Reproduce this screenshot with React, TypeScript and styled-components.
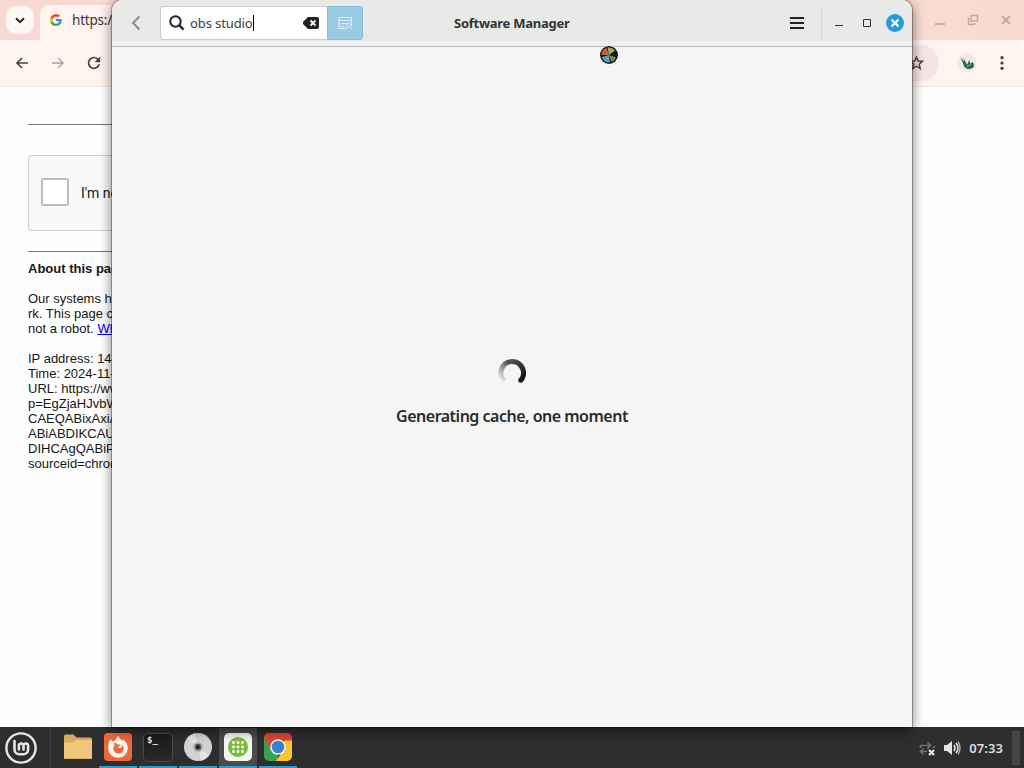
import React from "react";
import styled, { createGlobalStyle } from "styled-components";

const GlobalStyle = createGlobalStyle`
  * { box-sizing: border-box; }
  html, body { margin: 0; padding: 0; overflow: hidden; }
  body { font-family: "Noto Sans", "Open Sans", sans-serif; }
  svg { display: block; flex: none; }
`;

const Desktop = styled.div`
  position: relative;
  width: 1024px;
  height: 768px;
  display: flex;
  flex-direction: column;
  overflow: hidden;
`;

/* Browser window */
const Browser = styled.section`
  flex: 1;
  min-height: 0;
  display: flex;
  flex-direction: column;
  background: #fefefe;
`;
const TabStrip = styled.header`
  height: 40px;
  flex: none;
  display: flex;
  align-items: stretch;
  background: linear-gradient(90deg, #f8d9d2, #fae0d6 60%, #f8dbd0);
`;
const TabSearch = styled.div`
  width: 28px;
  height: 28px;
  margin: 6px;
  border-radius: 10px;
  background: #fff7f4;
  display: grid;
  place-items: center;
`;
const Tab = styled.div`
  width: 240px;
  margin-top: 5px;
  padding: 0 10px 5px;
  display: flex;
  align-items: center;
  gap: 10px;
  border-radius: 10px 10px 0 0;
  background: #fff4f0;
  font-size: 13.5px;
  letter-spacing: -0.2px;
  color: #3b3534;
  white-space: nowrap;
`;
const WindowButtons = styled.div`
  margin-left: auto;
  padding-right: 11px;
  display: flex;
  align-items: center;
  gap: 20px;
`;
const BrowserBar = styled.div`
  height: 47px;
  flex: none;
  display: flex;
  align-items: center;
  justify-content: space-between;
  background: #fff4f0;
  border-bottom: 1px solid #f6e4df;
  border-top-right-radius: 10px;
`;
const BarGroup = styled.div`
  display: flex;
  align-items: center;
  gap: 20px;
  padding-left: 14px;
`;
const BarEnd = styled.div`
  display: flex;
  align-items: center;
  padding-right: 14px;
`;
const Omnibox = styled.div`
  width: 90px;
  height: 36px;
  margin-right: 18px;
  padding-right: 14px;
  border-radius: 18px;
  background: #f5e5e6;
  display: flex;
  align-items: center;
  justify-content: flex-end;
`;
const Avatar = styled.div`
  margin-right: 17px;
`;
const Page = styled.main`
  width: 428px;
  padding: 37px 0 0 28px;
  font: 13px/15px "Liberation Sans", Arial, sans-serif;
  color: #161616;
`;
const Rule = styled.hr`
  border: 0;
  height: 1px;
  margin: 0;
  background: #777;
`;
const Captcha = styled.div`
  height: 76px;
  width: 304px;
  margin: 30px 0 20px;
  padding: 0 12px;
  display: flex;
  align-items: center;
  gap: 12px;
  border: 1px solid #cfcfcf;
  border-radius: 3px;
  background: #f9f9f9;
  font: 14px/17px Roboto, sans-serif;
`;
const CheckBox = styled.span`
  width: 28px;
  height: 28px;
  margin-top: -3px;
  border: 2px solid #bdbdbd;
  border-radius: 2px;
  background: #fff;
`;
const About = styled.h1`
  margin: 9px 0 15px;
  font-size: 13px;
  line-height: 15px;
`;
const Paragraph = styled.p`
  margin: 0 0 15px;
  white-space: nowrap;
`;
const Link = styled.span`
  color: #0000e0;
  text-decoration: underline;
`;

/* Software manager window */
const Manager = styled.section`
  position: absolute;
  left: 112px;
  top: 0;
  width: 800px;
  height: 727px;
  display: flex;
  flex-direction: column;
  background: #f5f5f5;
  border-radius: 10px 10px 0 0;
  box-shadow: 0 0 0 1px rgba(0, 0, 0, 0.28), 0 3px 13px rgba(0, 0, 0, 0.55);
`;
const TitleBar = styled.header`
  height: 47px;
  flex: none;
  display: flex;
  align-items: center;
  padding: 0 8px 1px 19px;
  border-bottom: 1px solid #bcbcbc;
  border-radius: 10px 10px 0 0;
  background: linear-gradient(#e9e9e8, #e9e9e8 41px, #efefef 42px);
`;
const Search = styled.div`
  width: 167px;
  height: 34px;
  margin-left: 17px;
  padding: 0 8px 0 8px;
  display: flex;
  align-items: center;
  background: #fff;
  border: 1px solid #cbcbcb;
  border-right: 0;
  border-radius: 3px 0 0 3px;
`;
const Query = styled.span`
  flex: 1;
  display: flex;
  align-items: center;
  margin-left: 5px;
  font-size: 13px;
  letter-spacing: -0.1px;
  color: #3d3d3d;
  white-space: nowrap;
`;
const Caret = styled.i`
  width: 1px;
  height: 16px;
  background: #000;
`;
const SearchToggle = styled.div`
  width: 36px;
  height: 34px;
  display: grid;
  place-items: center;
  background: #9acbe5;
  border: 1px solid #86bcd8;
  border-radius: 0 3px 3px 0;
`;
const Title = styled.h2`
  flex: 1;
  margin: 0 0 0 91px;
  font-size: 13px;
  font-weight: 700;
  line-height: 18px;
  letter-spacing: -0.26px;
  color: #333;
  white-space: nowrap;
`;
const Divider = styled.i`
  width: 1px;
  height: 32px;
  margin: 0 8px 0 16px;
  background: #d6d6d6;
`;
const Controls = styled.div`
  display: flex;
  align-items: center;
  gap: 10px;
`;
const ManagerBody = styled.div`
  flex: 1;
  display: flex;
  flex-direction: column;
  align-items: center;
  padding-top: 311px;
`;
const Status = styled.p`
  margin: 16px 0 0;
  font-size: 16px;
  line-height: 24px;
  font-weight: 600;
  letter-spacing: -0.5px;
  color: #2b2b2b;
  white-space: nowrap;
`;
const Pointer = styled.div`
  position: absolute;
  left: 598px;
  top: 45px;
`;

/* Panel */
const Taskbar = styled.footer`
  height: 41px;
  flex: none;
  display: flex;
  align-items: stretch;
  background: #2e2e2f;
`;
const MenuButton = styled.div`
  width: 51px;
  padding: 0 0 0 5px;
  display: flex;
  align-items: center;
  border-right: 1px solid #3d3d3d;
  margin-right: 7px;
`;
const Task = styled.div<{ $running?: boolean; $active?: boolean }>`
  width: 38px;
  margin: 1px 1px 0;
  display: flex;
  justify-content: center;
  padding-top: 5px;
  background: ${(p) => (p.$active ? "#4b4b4c" : "transparent")};
  border-bottom: 2px solid ${(p) => (p.$running ? "#2b9bd0" : "transparent")};
`;
const TerminalBox = styled.div`
  width: 30px;
  height: 29px;
  padding: 2px 3px;
  border: 1px solid #4a4a4a;
  border-radius: 5px;
  background: linear-gradient(#1b1b1b, #292929);
  font: 700 9px/9px "DejaVu Sans Mono", monospace;
  color: #f2f2f2;
`;
const Tray = styled.div`
  margin-left: auto;
  display: flex;
  align-items: center;
  gap: 8px;
`;
const Clock = styled.time`
  font-size: 13px;
  line-height: 18px;
  font-weight: 600;
  letter-spacing: 0.1px;
  color: #dedede;
`;
const ShowDesktop = styled.i`
  width: 8px;
  height: 34px;
  margin: 0 4px 0 1px;
  background: #454545;
`;

const Chevron = () => (
  <svg width="10" height="7" viewBox="0 0 10 7" fill="none" stroke="#2c2524" strokeWidth="2"><path d="M1 1.2 5 5.2 9 1.2" /></svg>
);
const GoogleMark = () => (
  <svg width="12" height="12" viewBox="0 0 24 24">
    <path fill="#4285f4" d="M23.5 12.3c0-.8-.1-1.6-.2-2.3H12v4.500h6.500a5.500 5.500 0 0 1-2.400 3.600v3h3.900c2.200-2.100 3.500-5.100 3.500-8.800z" />
    <path fill="#34a853" d="M12 24c3.200 0 6-1.100 8-2.900l-3.900-3c-1.100.7-2.500 1.200-4.100 1.200-3.100 0-5.800-2.100-6.700-5H1.300v3.100A12 12 0 0 0 12 24z" />
    <path fill="#fbbc05" d="M5.300 14.300a7 7 0 0 1 0-4.600V6.600h-4a12 12 0 0 0 0 10.800z" />
    <path fill="#ea4335" d="M12 4.800c1.800 0 3.300.6 4.600 1.800L20 3.200A12 12 0 0 0 1.300 6.600l4 3.100c.9-2.900 3.600-4.900 6.700-4.900z" />
  </svg>
);
const BackArrow = ({ color }: { color: string }) => (
  <svg width="16" height="16" viewBox="0 0 16 16" fill="none" stroke={color} strokeWidth="1.6"><path d="M14 8H3M8 3 3 8l5 5" /></svg>
);
const ForwardArrow = ({ color }: { color: string }) => (
  <svg width="16" height="16" viewBox="0 0 16 16" fill="none" stroke={color} strokeWidth="1.4"><path d="M2 8h11M8 3l5 5-5 5" /></svg>
);
const Reload = () => (
  <svg width="16" height="16" viewBox="0 0 16 16" fill="none" stroke="#4d403e" strokeWidth="1.7"><path d="M13.200 9.200A5.400 5.400 0 1 1 12.300 4.700L13.500 6" /><path fill="#4d403e" stroke="none" d="M14.200 1.500v5.700H8.500z" /></svg>
);
const MintMenu = () => (
  <svg width="32" height="32" viewBox="0 0 32 32" fill="none" stroke="#e6e6e6" strokeLinecap="round">
    <circle cx="16" cy="16" r="14.600" strokeWidth="2.400" />
    <path strokeWidth="2.600" d="M9.500 9v8.500a4.800 4.800 0 0 0 4.800 4.800h4a4.800 4.800 0 0 0 4.800-4.800v-3.700a2.300 2.300 0 0 0-4.600 0v3.700M18.500 13.800a2.300 2.300 0 0 0-4.600 0v3.700" />
  </svg>
);
const Folder = () => (
  <svg width="28" height="28" viewBox="0 0 28 28">
    <path fill="#d5a961" d="M0 3A1.500 1.500 0 0 1 1.500 1.500h8l3 3h14A1.500 1.500 0 0 1 28 6v14H0z" />
    <path fill="#f2c679" d="M0 9.500h9L12 7h16v17.500a1.500 1.500 0 0 1-1.500 1.500h-25A1.500 1.500 0 0 1 0 24.500z" />
    <path stroke="#dbae67" d="M.5 25.500h27" />
  </svg>
);
const Firefox = () => (
  <svg width="28" height="28" viewBox="0 0 28 28">
    <rect width="28" height="28" rx="4" fill="#f0683c" />
    <path fill="#fff8f2" d="M5 9c.4-1 1.200-2 2-2.700.2 1 .6 1.600 1.400 2.200 1-.8 2-1.200 3.200-1.300C12 5.500 13 4 14.700 3c.3 2.300 2.300 3.300 3.700 5 .3-.5.3-1 .2-1.700 3.200 2 5.200 5 5.200 8.700A9.800 9.800 0 0 1 4.200 15c0-2.200.2-4 .8-6z" />
    <path fill="#f0683c" d="M10 10.200c1.500-.5 2.600 0 3.400 1l3.400.6c-.5 1.200-1.700 1.500-2.900 2 .2 1 1.500 1.500 3.200 1 .8-1 .9-2.100.4-3.300 1.400.9 2.200 2.200 2.200 3.800a5.200 5.200 0 0 1-10.400.2c0-1.500.5-2.300 1.400-3z" />
  </svg>
);
const Disc = () => (
  <svg width="28" height="28" viewBox="0 0 28 28">
    <circle cx="14" cy="14" r="14" fill="#d3d3d1" />
    <path fill="#e4e4e2" d="M14 14 3 5.500A14 14 0 0 1 11 .3zM14 14l11 8.500a14 14 0 0 1-8 5.200z" />
    <circle cx="14" cy="14" r="5.200" fill="#b6b6b5" />
    <circle cx="14" cy="14" r="3.200" fill="#555" />
    <circle cx="14" cy="14" r="1.600" fill="#151515" />
  </svg>
);
const dots = [9.5, 14, 18.5];
const SoftwareIcon = () => (
  <svg width="28" height="28" viewBox="0 0 28 28">
    <rect width="28" height="28" rx="5" fill="#f3f5f1" />
    <circle cx="14" cy="14" r="10" fill="#7cba3d" />
    {dots.map((y) => dots.map((x) => <rect key={`${x}-${y}`} x={x - 1.4} y={y - 1.4} width="2.8" height="2.8" rx=".8" fill="#f4f8ec" />))}
  </svg>
);
const Chrome = () => (
  <svg width="28" height="28" viewBox="0 0 28 28">
    <defs><clipPath id="tile"><rect width="28" height="28" rx="5" /></clipPath></defs>
    <g clipPath="url(#tile)">
      <path fill="#35a352" d="M0 0h14v28H0z" />
      <path fill="#fbc72e" d="M14 14 21 7h7v21H12l6-9z" />
      <path fill="#df4437" d="M0 0h28v7.500H14L7.300 17.500 0 4.500z" />
    </g>
    <circle cx="14" cy="14" r="7.800" fill="#f5f7fa" />
    <circle cx="14" cy="14" r="6.300" fill="#3d7fc8" />
  </svg>
);

export default function App() {
  return (
    <Desktop>
      <GlobalStyle />
      <Browser>
        <TabStrip>
          <TabSearch><Chevron /></TabSearch>
          <Tab><GoogleMark />https://w</Tab>
          <WindowButtons>
            <svg width="14" height="12" stroke="#cdaea7" strokeWidth="2"><path d="M2 10h10" /></svg>
            <svg width="12" height="12" fill="none" stroke="#c5a7a1" strokeWidth="1.500"><path d="M4 1.500h6.500v5.500H4zM1.500 4.500v6h6V9M1.500 4.500H3" /></svg>
            <svg width="14" height="12" stroke="#c5a7a1" strokeWidth="2"><path d="m3 2 8 8M11 2l-8 8" /></svg>
          </WindowButtons>
        </TabStrip>
        <BrowserBar>
          <BarGroup>
            <BackArrow color="#4d403e" />
            <ForwardArrow color="#aba09d" />
            <Reload />
          </BarGroup>
          <BarEnd>
            <Omnibox>
              <svg width="16" height="16" viewBox="0 0 16 16" fill="none" stroke="#4a3d40" strokeWidth="1.400"><path d="m7.500 2 1.700 4 4.300.4-3.300 2.800 1 4.300-3.700-2.300-3.700 2.300 1-4.300L1.500 6.400 5.800 6z" /></svg>
            </Omnibox>
            <Avatar>
              <svg width="20" height="20" viewBox="0 0 20 20">
                <circle cx="10" cy="10" r="9.500" fill="#eee9e4" />
                <path fill="#2c6653" d="m3.500 4.500 3.500 4L6.500 5l2.500 5 1.500 1.500L12 7l1.500 3.500L16 9l1 3.500c0 2.500-3 4-6 3.500s-4-2.500-4.500-4.500z" />
                <path stroke="#9eb5aa" d="m10 13.500 4-2" />
              </svg>
            </Avatar>
            <svg width="16" height="16" fill="#453b39"><circle cx="8" cy="2.700" r="1.600" /><circle cx="8" cy="8" r="1.600" /><circle cx="8" cy="13.300" r="1.600" /></svg>
          </BarEnd>
        </BrowserBar>
        <Page>
          <Rule />
          <Captcha><CheckBox />I'm not a robot</Captcha>
          <Rule />
          <About>About this page</About>
          <Paragraph>Our systems have<br />rk. This page checks<br />not a robot. <Link>Why</Link></Paragraph>
          <Paragraph>IP address: 14<br />Time: 2024-11-<br />URL: https://www<br />p=EgZjaHJvbW<br />CAEQABixAxiA<br />ABiABDIKCAU<br />DIHCAgQABiP<br />sourceid=chrome</Paragraph>
        </Page>
      </Browser>

      <Manager>
        <TitleBar>
          <svg width="12" height="16" fill="none" stroke="#8b8b8b" strokeWidth="2"><path d="M8.500 1.500 2 8l6.500 6.500" /></svg>
          <Search>
            <svg width="16" height="16" fill="none" stroke="#252525" strokeWidth="2"><circle cx="6.500" cy="6.500" r="5.200" /><path strokeWidth="2.400" d="m10.200 10.200 4.400 4.400" /></svg>
            <Query>obs studio<Caret /></Query>
            <svg width="16" height="12"><path fill="#222" d="M5 0h9a2 2 0 0 1 2 2v8a2 2 0 0 1-2 2H5L0 7V5z" /><path stroke="#fff" strokeWidth="1.800" d="m7.500 3.500 5 5m0-5-5 5" /></svg>
          </Search>
          <SearchToggle>
            <svg width="16" height="14" fill="none" stroke="#dceef7"><path d="M2 1.500h12.500v8M2 1.500v11h8M1 4.500h13.500M4 7.500h6M4 10.500h4" /><circle cx="11.500" cy="9" r="2" /><path d="m13 10.500 2 2.500" /></svg>
          </SearchToggle>
          <Title>Software Manager</Title>
          <svg width="16" height="14" stroke="#232323" strokeWidth="2"><path d="M1 2h14M1 7h14M1 12h14" /></svg>
          <Divider />
          <Controls>
            <svg width="18" height="18" stroke="#303030"><path d="M5 11.500h8" /></svg>
            <svg width="18" height="18" fill="none" stroke="#303030"><path d="M5.500 5.500h7v7h-7z" /></svg>
            <svg width="18" height="18"><circle cx="9" cy="9" r="9" fill="#249cdc" /><path stroke="#fff" strokeWidth="2.200" d="m5.500 5.500 7 7m0-7-7 7" /></svg>
          </Controls>
        </TitleBar>
        <ManagerBody>
          <svg width="28" height="30" viewBox="0 0 28 30" fill="none" strokeWidth="5">
            <defs>
              <linearGradient id="fade" x1="0" y1="1" x2="0.600" y2="0"><stop offset="0" stopColor="#262626" stopOpacity="0" /><stop offset="1" stopColor="#262626" stopOpacity=".8" /></linearGradient>
              <linearGradient id="dark" x1="0" y1="0" x2=".6" y2="1"><stop offset="0" stopColor="#262626" stopOpacity=".8" /><stop offset="1" stopColor="#181818" /></linearGradient>
            </defs>
            <path stroke="url(#fade)" d="M6.300 23.200A11.500 11.500 0 0 1 14 3.500" />
            <path stroke="url(#dark)" d="M14 3.500A11.500 11.500 0 0 1 22.800 22.400" />
            <circle cx="22.700" cy="22.300" r="2.500" fill="#181818" stroke="none" />
          </svg>
          <Status>Generating cache, one moment</Status>
        </ManagerBody>
      </Manager>
      <Pointer>
        <svg width="22" height="22" viewBox="0 0 22 22">
          <circle cx="11" cy="11" r="10.200" fill="#fff" stroke="#d8d8d8" strokeWidth=".5" />
          <circle cx="11" cy="10" r="9" fill="#171916" />
          <path fill="#c0683c" d="m11 10-7.500 0a7.500 7.500 0 0 1 5-7z" />
          <path fill="#a3a763" d="m11 10-1.500-7.400A7.500 7.500 0 0 1 17 5.500z" />
          <path fill="#65935a" d="m11 10 7 2.500a7.500 7.500 0 0 1-4.500 4.600z" />
          <path fill="#4b9fc5" d="m11 10 1 7.500A7.500 7.500 0 0 1 3.700 12z" />
        </svg>
      </Pointer>

      <Taskbar>
        <MenuButton><MintMenu /></MenuButton>
        <Task><Folder /></Task>
        <Task $running><Firefox /></Task>
        <Task $running><TerminalBox>$_</TerminalBox></Task>
        <Task $running><Disc /></Task>
        <Task $running $active><SoftwareIcon /></Task>
        <Task $running><Chrome /></Task>
        <Tray>
          <svg width="17" height="16" fill="none" stroke="#6e6e6e" strokeWidth="1.700"><path d="M1.500 8V5.500h10M8.500 2.500l3 3-3 3M15 6v2M8 11.500H2M4.500 8.500l-3 3 3 3" /><path stroke="#eee" strokeWidth="2" d="m10 10 5 5m0-5-5 5" /></svg>
          <svg width="17" height="16" fill="none" stroke="#e6e6e6" strokeWidth="1.500"><path fill="#e6e6e6" stroke="none" d="M0 5h3l5-4v14l-5-4H0z" /><path d="M10 5q2 3 0 6M12 3q4 5 0 10" /><path stroke="#aaa" d="M14 1.500q4 6.500 0 13" /></svg>
          <Clock>07:33</Clock>
          <ShowDesktop />
        </Tray>
      </Taskbar>
    </Desktop>
  );
}
